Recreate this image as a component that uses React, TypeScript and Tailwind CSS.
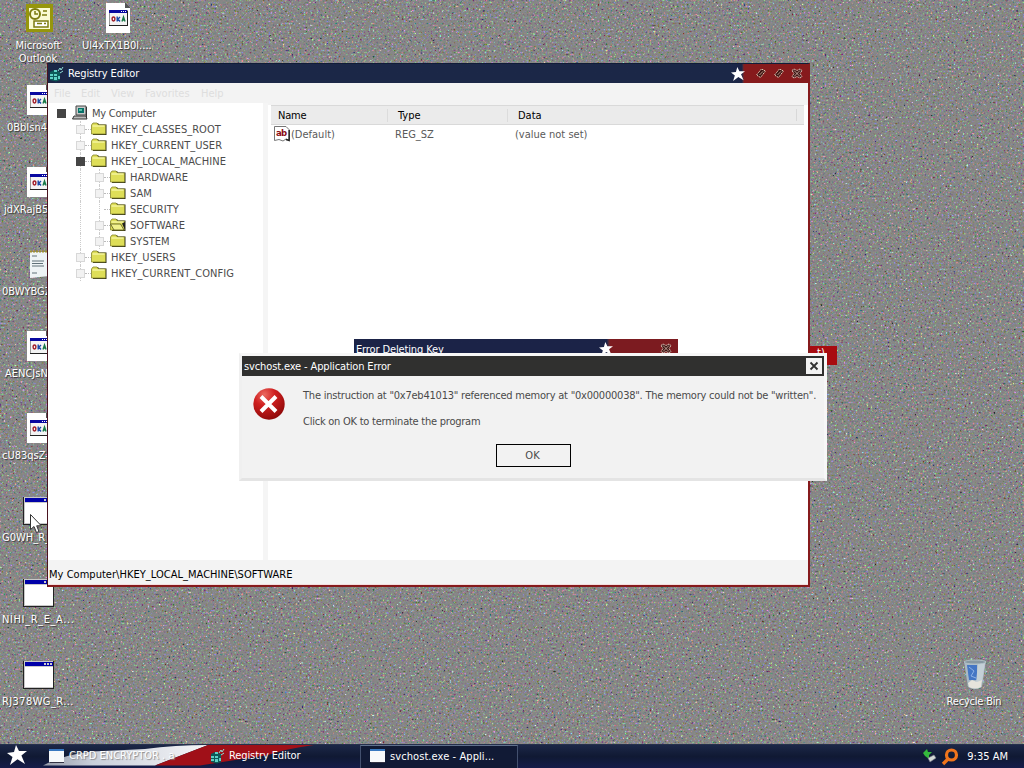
import type { ReactNode } from "react";
import clsx from "clsx";

const STAR = "M9 0 12 6 20 6 14.4 10.500 18 19 10.500 14.2 3 20 5.500 12 0 8 7 7Z";

function Star({ className }: { className?: string }) {
  return (
    <svg viewBox="0 0 20 20" className={className}>
      <path d={STAR} fill="#fff" />
    </svg>
  );
}

// Grey desktop with coloured static
function Wallpaper() {
  return (
    <svg className="absolute inset-0 h-full w-full">
      <filter id="static" x="0" y="0" width="100%" height="100%" colorInterpolationFilters="sRGB">
        <feTurbulence type="fractalNoise" baseFrequency="0.48" numOctaves="2" seed="4" />
        <feColorMatrix values="1.4 .2 .2 0 -.4  .2 1.4 .2 0 -.4  .2 .2 1.4 0 -.4  0 0 0 0 1" />
        <feComponentTransfer>
          <feFuncR type="table" tableValues=".15 .38 .51 .525 .53 .55 .74 .95" />
          <feFuncG type="table" tableValues=".15 .38 .51 .525 .53 .55 .74 .95" />
          <feFuncB type="table" tableValues=".15 .38 .51 .525 .53 .55 .74 .95" />
        </feComponentTransfer>
      </filter>
      <rect width="100%" height="100%" filter="url(#static)" />
    </svg>
  );
}

function PageIcon() {
  return (
    <svg viewBox="0 0 32 32" className="h-8 w-8" shapeRendering="crispEdges">
      <path d="M5 1H24L29 6V31H5Z" fill="#fff" />
      <path d="M24 1V6H29Z" fill="#555" />
      <path d="M8 8H27V24H8Z" fill="#999" />
      <path d="M8 8H26V11H8Z" fill="#0808a0" />
      <path d="M9 11H26V23H9Z" fill="#f4f4f4" />
      <path d="M8 23H27V24H8ZM26 9H27V24H26Z" fill="#222" />
      <path d="M20 9h1v1h-1zM22 9h1v1h-1zM24 9h1v1h-1z" fill="#fff" />
      <g shapeRendering="auto">
        <ellipse cx="12.5" cy="17" rx="1.4" ry="2" fill="none" stroke="#a01c28" strokeWidth="1.4" />
        <path d="M16.2 14.5v5M19 15l-2 2 2 2.500" stroke="#1848a8" strokeWidth="1.4" fill="none" />
        <path d="M21 19.500l1.500-4.500 1.500 4.500M21.500 18h2" fill="none" stroke="#187848" strokeWidth="1.4" />
      </g>
    </svg>
  );
}

function WindowIcon() {
  return (
    <svg viewBox="0 0 32 32" className="h-8 w-8" shapeRendering="crispEdges">
      <path d="M1 3H33V31H1Z" fill="#222" />
      <path d="M2 3H31V30H2Z" fill="#c8c8c8" />
      <path d="M3 4H31V8H3Z" fill="#0000a8" />
      <path d="M3 9H31V29H3Z" fill="#fff" />
      <path d="M22 5h2v2h-2zM25 5h2v2h-2zM28 5h2v2h-2z" fill="#ccc" />
    </svg>
  );
}

function NotepadIcon() {
  return (
    <svg viewBox="0 0 32 32" className="h-8 w-8">
      <path d="M8 4H27V28L8 30Z" fill="#eef3f5" />
      <path d="M8 3.5H28" stroke="#a09030" strokeWidth="2" strokeDasharray="2 1" />
      <path d="M10 8h5M10 13h12M10 15.500h11M10 18h12M10 25h5" stroke="#607078" />
    </svg>
  );
}

function OutlookIcon() {
  return (
    <svg viewBox="0 0 32 32" className="h-8 w-8">
      <path d="M4 2H31V30H4Z" fill="#96960c" />
      <path d="M7 6H28V27H7Z" fill="#fbfbd4" />
      <circle cx="13" cy="12" r="5" fill="none" stroke="#7c7c10" strokeWidth="2" />
      <path d="M13 9v3h3M21 9h4M20 13h5" fill="none" stroke="#7c7c10" strokeWidth="1.5" />
      <path d="M12 19H26V25H12Z" fill="#fff" stroke="#7c7c10" strokeWidth="1.5" />
      <path d="M15 21.5h5M22 21.5h2" stroke="#7c7c10" strokeWidth="1.5" />
    </svg>
  );
}

function BinIcon() {
  return (
    <svg viewBox="0 0 32 32" className="h-8 w-8">
      <path d="M6 3 28 3 24 29Q17 33 10 29Z" fill="#a9b9c4" />
      <path d="M9 7H19V22H11Z" fill="#4476c4" />
      <path d="M20 5 27 5 24 24 18 25Z" fill="#c4d0d6" />
      <path d="M10 25 14 22 19 24 24 22 23 29Q17 32 11 29Z" fill="#e6e4dc" />
      <path d="M11 9l5 4-3 5 5 2" fill="none" stroke="#8fb2e6" />
      <ellipse cx="17" cy="4" rx="11" ry="2" fill="#8798a2" stroke="#b8c6cc" strokeWidth=".8" />
    </svg>
  );
}

function RegeditIcon() {
  return (
    <svg viewBox="0 0 16 16" className="h-4 w-4 shrink-0">
      <path d="M2 6 6 4 12 6 12 14 8 15.5 2 14Z" fill="#0c5a58" />
      <path d="M2 8h3v2H2zM6 8h3v2H6zM2 11h3v2H2zM6 11h3v3H6zM10 10h2v3h-2zM6 4h3v2H6z" fill="#5fd0c4" />
      <path d="M10 5 12 2 13 4 15 1M12 7l3-2" stroke="#90e0d8" fill="none" />
    </svg>
  );
}

function FolderIcon({ open }: { open?: boolean }) {
  return (
    <svg viewBox="0 0 16 16" className="h-4 w-4 shrink-0">
      <path d="M2 3.5 3 2H7L8 3.5H15.5V14H2Z" fill="#2c2c18" />
      <path d="M.5 4 2 2H6L7.5 4H14.5V13H.5Z" fill="#dede58" stroke="#85852c" strokeWidth=".8" />
      <path d="M1.5 5H13.5" stroke="#ffffc0" />
      {open && (
        <>
          <path d="M.5 7H10.500L14 13H4Z" fill="#f1f18c" stroke="#55551c" strokeWidth=".8" />
          <path d="M12 6.5 15 13V5Z" fill="#222" />
        </>
      )}
    </svg>
  );
}

function ComputerIcon() {
  return (
    <svg viewBox="0 0 16 16" className="h-4 w-4 shrink-0">
      <path d="M4 1H14V10H4Z" fill="#c9c9c9" stroke="#444" />
      <path d="M6 3H12V8H6Z" fill="#087068" />
      <path d="M7 4h3v2H7z" fill="#58c0a8" />
      <path d="M2 11H14L15 14H.5Z" fill="#bbb" stroke="#333" />
      <path d="M14.5 2V13" stroke="#333" />
    </svg>
  );
}

function StringIcon() {
  return (
    <svg viewBox="0 0 16 16" className="h-4 w-4 shrink-0">
      <path d="M.5 .5H12L15 3.5V14L12 13 9 15 5 13.5 .5 14.5Z" fill="#fff" stroke="#777" />
      <path d="M15.2 4V14.5L12 13.5" fill="none" stroke="#222" strokeWidth="1.4" />
      <text x="2" y="10" fontSize="9.5" fontWeight="bold" fill="#8c0c14" textLength="11" className="font-['DejaVu_Sans']">
        ab
      </text>
    </svg>
  );
}

function SmallWindowIcon() {
  return (
    <svg viewBox="0 0 16 14" className="h-3.5 w-4 shrink-0" shapeRendering="crispEdges">
      <path d="M0 0H15V13H0Z" fill="#f7f9fb" />
      <path d="M0 0H15V2H0Z" fill="#3878c0" />
      <path d="M15 1V14H1V13H15Z" fill="#334" />
    </svg>
  );
}

function PencilButton() {
  return (
    <svg viewBox="0 0 12 12" className="h-3 w-3">
      <path d="M1.500 7 6.500 1 10.500 3 5.500 9.500Z" fill="#3c1412" stroke="#f0d8c4" strokeWidth=".9" strokeDasharray="1.5 .6" />
      <path d="M4.500 7 8 3.300" stroke="#e5c5b0" strokeWidth=".7" />
    </svg>
  );
}

function HatchButton() {
  return (
    <svg viewBox="0 0 12 12" className="h-3 w-3">
      <path
        d="M1 2.500 3 1 6 2.500 9 1 11 2.500 9 5.500 11 8.500 9 10 6 8.500 3 10 1 8.500 3 5.500Z"
        fill="#3c1412"
        stroke="#f0d8cc"
        strokeWidth=".9"
        strokeDasharray="1.5 .5"
      />
      <path d="M3 2.500 9 8.500M9 2.500 3 8.500" stroke="#f0d8cc" strokeWidth=".7" />
    </svg>
  );
}

interface DesktopIconProps {
  icon: ReactNode;
  label: string;
  labelClass?: string;
}

function DesktopIcon({ icon, label, labelClass }: DesktopIconProps) {
  return (
    <div className="flex h-[82px] w-[76px] flex-col items-center pt-[2px]">
      {icon}
      <span
        className={clsx(
          "mt-[5px] leading-[13px] whitespace-nowrap text-white [text-shadow:1px_1px_1px_#333]",
          labelClass ?? "self-start pl-[2px]",
        )}
      >
        {label}
      </span>
    </div>
  );
}

interface TreeNode {
  name: string;
  level: number;
  box: "filled" | "empty" | "none";
}

const TREE: TreeNode[] = [
  { name: "My Computer", level: 0, box: "filled" },
  { name: "HKEY_CLASSES_ROOT", level: 1, box: "empty" },
  { name: "HKEY_CURRENT_USER", level: 1, box: "empty" },
  { name: "HKEY_LOCAL_MACHINE", level: 1, box: "filled" },
  { name: "HARDWARE", level: 2, box: "empty" },
  { name: "SAM", level: 2, box: "empty" },
  { name: "SECURITY", level: 2, box: "none" },
  { name: "SOFTWARE", level: 2, box: "empty" },
  { name: "SYSTEM", level: 2, box: "empty" },
  { name: "HKEY_USERS", level: 1, box: "empty" },
  { name: "HKEY_CURRENT_CONFIG", level: 1, box: "empty" },
];

const INDENT = ["pl-[9px]", "pl-[28px]", "pl-[47px]"];

function TreeRow({ name, level, box }: TreeNode) {
  return (
    <div className={clsx("relative flex h-4 items-center", INDENT[level])}>
      {level === 2 && <span className="absolute top-0 left-8 h-4 border-l border-dotted border-[#ccc]" />}
      {level > 0 && (
        <span
          className={clsx(
            "absolute top-0 h-4 border-l border-dotted border-[#ccc]",
            level === 1 ? "left-8" : "left-[51px]",
          )}
        />
      )}
      <span
        className={clsx("relative h-[9px] w-[9px] shrink-0", {
          "bg-[#454545]": box === "filled",
          "border border-[#d8d8d8] bg-[#f2f2f2]": box === "empty",
        })}
      />
      <span className={clsx("w-1.5 shrink-0", level > 0 && "border-t border-dotted border-[#bbb]")} />
      {level === 0 ? <ComputerIcon /> : <FolderIcon open={name === "SOFTWARE"} />}
      <span
        className={clsx(
          "ml-1 whitespace-nowrap text-[#4c4c4c]",
          level === 0 ? "tracking-[-0.25px]" : "tracking-[0.04px]",
        )}
      >
        {name}
      </span>
    </div>
  );
}

function RegistryEditor() {
  return (
    <div className="absolute top-[63px] left-[47px] flex h-[524px] w-[763px] flex-col border-t border-r-2 border-b border-l border-t-[#111c38] border-r-[#861a1c] border-b-[#861a1c] border-l-[#4a1420] bg-[#f3f3f3]">
      <div className="flex h-[19px] shrink-0 items-center bg-linear-to-r from-[#1b2747] from-90% via-[#1b2345] via-[91.3%] to-[#861a1c] to-[91.6%] text-white">
        <RegeditIcon />
        <span className="ml-1 tracking-[-0.12px]">Registry Editor</span>
        <Star className="ml-auto h-3.5 w-3.5" />
        <div className="ml-[10px] flex gap-1.5 pr-[5px]">
          <PencilButton />
          <PencilButton />
          <HatchButton />
        </div>
      </div>
      <div className="flex h-[20px] shrink-0 items-center pl-[6px] text-[#dedede]">
        <span className="w-[27px]">File</span>
        <span className="w-[30px]">Edit</span>
        <span className="w-[34px]">View</span>
        <span className="w-[56px]">Favorites</span>
        <span>Help</span>
      </div>
      <div className="flex min-h-0 flex-1">
        <div className="w-[215px] bg-white pt-[2px]">
          {TREE.map((node) => (
            <TreeRow key={node.name} {...node} />
          ))}
        </div>
        <div className="w-[5px] bg-[#f5f5f5]" />
        <div className="flex min-w-0 flex-1 flex-col bg-white">
          <div className="h-[2px] bg-[#f3f3f3]" />
          <div className="mr-1 ml-[3px] flex h-[20px] items-center border-t border-b border-[#d9d9d9] bg-[#ebebeb] text-black">
            <span className="w-[117px] border-r border-[#dcdcdc] pl-[7px] tracking-[-0.2px]">Name</span>
            <span className="w-[120px] border-r border-[#dcdcdc] pl-[10px]">Type</span>
            <span className="pl-[10px]">Data</span>
            <span className="mr-[7px] ml-auto h-3 border-r border-[#d8d8d8]" />
          </div>
          <div className="flex h-[18px] items-center pl-[6px] text-[#5a5a5a]">
            <StringIcon />
            <span className="ml-px w-[104px]">(Default)</span>
            <span className="w-[120px]">REG_SZ</span>
            <span>(value not set)</span>
          </div>
        </div>
      </div>
      <div className="flex h-[24px] shrink-0 items-center pt-[4px] pl-[1px] tracking-[0.03px] text-black">
        My Computer\HKEY_LOCAL_MACHINE\SOFTWARE
      </div>
      <div className="h-[2px] shrink-0 border-b border-[#861a1c] bg-[#f3dede]" />
    </div>
  );
}

function DeletingKeyDialog() {
  return (
    <div className="absolute top-[339px] left-[354px] flex h-[20px] w-[324px] items-center bg-linear-to-r from-[#1b2347] from-78% to-[#7c1b20] to-[79%] pl-[2px] text-white">
      <span className="tracking-[-0.13px]">Error Deleting Key</span>
      <Star className="ml-auto h-3.5 w-3.5" />
      <span className="mr-1.5 ml-[47px]">
        <HatchButton />
      </span>
    </div>
  );
}

function ErrorDialog() {
  return (
    <div className="absolute top-[353px] left-[239px] h-[128px] w-[588px] border-[3px] border-t-[#f7f7f7] border-r-[#f7f7f7] border-b-[#e4e4e4] border-l-[#f0f0f0] bg-[#f2f2f2] text-[#4a4a4a]">
      <div className="flex h-[20px] items-center justify-between bg-[#30302f] pr-0.5 pl-0.5 text-white">
        <span className="tracking-[-0.13px]">svchost.exe - Application Error</span>
        <span className="flex h-4 w-4 items-center justify-center bg-[#f2f2f2]">
          <svg viewBox="0 0 10 10" className="h-2.5 w-2.5">
            <path d="M1.5 1.5 8.5 8.5M8.5 1.5 1.5 8.5" stroke="#303030" strokeWidth="1.8" />
          </svg>
        </span>
      </div>
      <div className="flex pt-3 pl-[11px]">
        <svg viewBox="0 0 32 32" className="h-8 w-8 shrink-0">
          <defs>
            <radialGradient id="stop" cx=".35" cy=".2" r=".85">
              <stop offset="0" stopColor="#ea6a60" />
              <stop offset=".4" stopColor="#d02020" />
              <stop offset="1" stopColor="#8c0808" />
            </radialGradient>
          </defs>
          <circle cx="16" cy="16" r="15.7" fill="url(#stop)" />
          <path d="M8 8.500 23 23.500M23 8.500 8 23.500" stroke="#fff" strokeWidth="4" />
        </svg>
        <div className="ml-[18px] pt-px whitespace-nowrap">
          <p className="leading-[14px] tracking-[-0.22px]">
            The instruction at "0x7eb41013" referenced memory at "0x00000038". The memory could not be "written".
          </p>
          <p className="mt-3 leading-[14px] tracking-[-0.24px]">Click on OK to terminate the program</p>
        </div>
      </div>
      <button className="mt-[15px] ml-[254px] block h-[23px] w-[75px] border border-black pr-0.5 text-center leading-none">
        OK
      </button>
    </div>
  );
}

function Taskbar() {
  return (
    <div className="absolute bottom-0 left-0 flex h-[24px] w-full items-center border-t border-[#26304c] bg-linear-to-b from-[#1c2747] via-[#101933] to-[#151c4a] text-white">
      <svg viewBox="0 0 320 23" className="absolute top-0 left-0 h-[23px] w-[320px]">
        <defs>
          <linearGradient id="stripe">
            <stop offset="0" stopColor="#9499a8" />
            <stop offset=".3" stopColor="#c9cfda" />
            <stop offset="1" stopColor="#f5f5f7" />
          </linearGradient>
        </defs>
        <path d="M43 20.500Q62 10 92 6.500Q120 5 145 4Q175 0 208 0L155 20.500Z" fill="url(#stripe)" />
        <path d="M155 20.500 208 0H314Q285 4 268 10L200 20.500Z" fill="#a01018" />
      </svg>
      <Star className="relative -top-0.5 ml-[7px] h-5 w-5" />
      <div className="relative -top-px ml-[22px] flex w-[160px] items-center">
        <SmallWindowIcon />
        <span className="ml-1 whitespace-nowrap [text-shadow:1px_1px_1px_#888]">CRPD ENCRYPTOR . a</span>
      </div>
      <div className="relative -top-px flex w-[151px] items-center">
        <RegeditIcon />
        <span className="ml-1 tracking-[-0.1px]">Registry Editor</span>
      </div>
      <div className="relative flex h-full w-[158px] items-center border-t border-r border-l border-t-[#60708c] border-r-[#43506e] border-l-[#43506e] bg-[#111a35] pb-0.5 pl-[9px]">
        <SmallWindowIcon />
        <span className="ml-1 tracking-[0.08px]">svchost.exe - Appli...</span>
      </div>
      <div className="relative mr-[16px] ml-auto flex items-center">
        <svg viewBox="0 0 16 16" className="h-4 w-4">
          <path d="M1 4 5 0 6 3 10 3 7 6 7 10 3 7Z" fill="#35b83c" />
          <path d="M6 9 12 6 14 9 8 13Z" fill="#d4d8d4" stroke="#778" strokeWidth=".6" />
        </svg>
        <svg viewBox="0 0 18 18" className="ml-[3px] h-4.5 w-4.5">
          <circle cx="10.5" cy="7" r="5" fill="none" stroke="#f0741c" strokeWidth="3.2" />
          <path d="M7 11 2 16" stroke="#f0741c" strokeWidth="3.4" />
        </svg>
        <span className="ml-[8px]">9:35 AM</span>
      </div>
    </div>
  );
}

export default function App() {
  return (
    <div className="relative h-screen w-screen overflow-hidden bg-[#858585] text-[11px] leading-[13px] [font-stretch:condensed] font-['DejaVu_Sans_Condensed','DejaVu_Sans',sans-serif]">
      <Wallpaper />
      <div className="relative flex gap-[3px]">
        <div className="flex flex-col">
          <DesktopIcon icon={<OutlookIcon />} label={"Microsoft\nOutlook"} labelClass="whitespace-pre-line text-center" />
          <DesktopIcon icon={<PageIcon />} label="0BbIsn4" labelClass="self-start pl-[7px]" />
          <DesktopIcon icon={<PageIcon />} label="jdXRajB5" labelClass="self-start pl-[4px]" />
          <DesktopIcon icon={<NotepadIcon />} label="0BWYBGZ" />
          <DesktopIcon icon={<PageIcon />} label="AENCJsN" labelClass="self-start pl-[5px]" />
          <DesktopIcon icon={<PageIcon />} label="cU83qsZ-" />
          <DesktopIcon icon={<WindowIcon />} label="G0WH_R_" />
          <DesktopIcon icon={<WindowIcon />} label="NIHI_R_E_A..." labelClass="self-start pl-[2px] tracking-[0.6px]" />
          <DesktopIcon icon={<WindowIcon />} label="RJ378WG_R..." labelClass="self-start pl-[2px] tracking-[0.4px]" />
        </div>
        <DesktopIcon icon={<PageIcon />} label="Ul4xTX1B0l...." labelClass="self-start pl-[3px]" />
      </div>
      <div className="absolute top-[656px] left-[936px]">
        <DesktopIcon icon={<BinIcon />} label="Recycle Bin" labelClass="text-center tracking-[-0.2px]" />
      </div>
      <div className="absolute top-[346px] left-[809px] h-[19px] w-[28px] bg-[#a80c10] pl-2 text-white">t)</div>
      <RegistryEditor />
      <DeletingKeyDialog />
      <ErrorDialog />
      <Taskbar />
      <svg viewBox="0 0 12 20" className="absolute top-[514px] left-[30px] h-5 w-3">
        <path d="M.5 .5V15.5L4 12.5 6.5 18.5 9 17.5 6.7 11.8H11.3Z" fill="#fff" stroke="#333" />
      </svg>
    </div>
  );
}
